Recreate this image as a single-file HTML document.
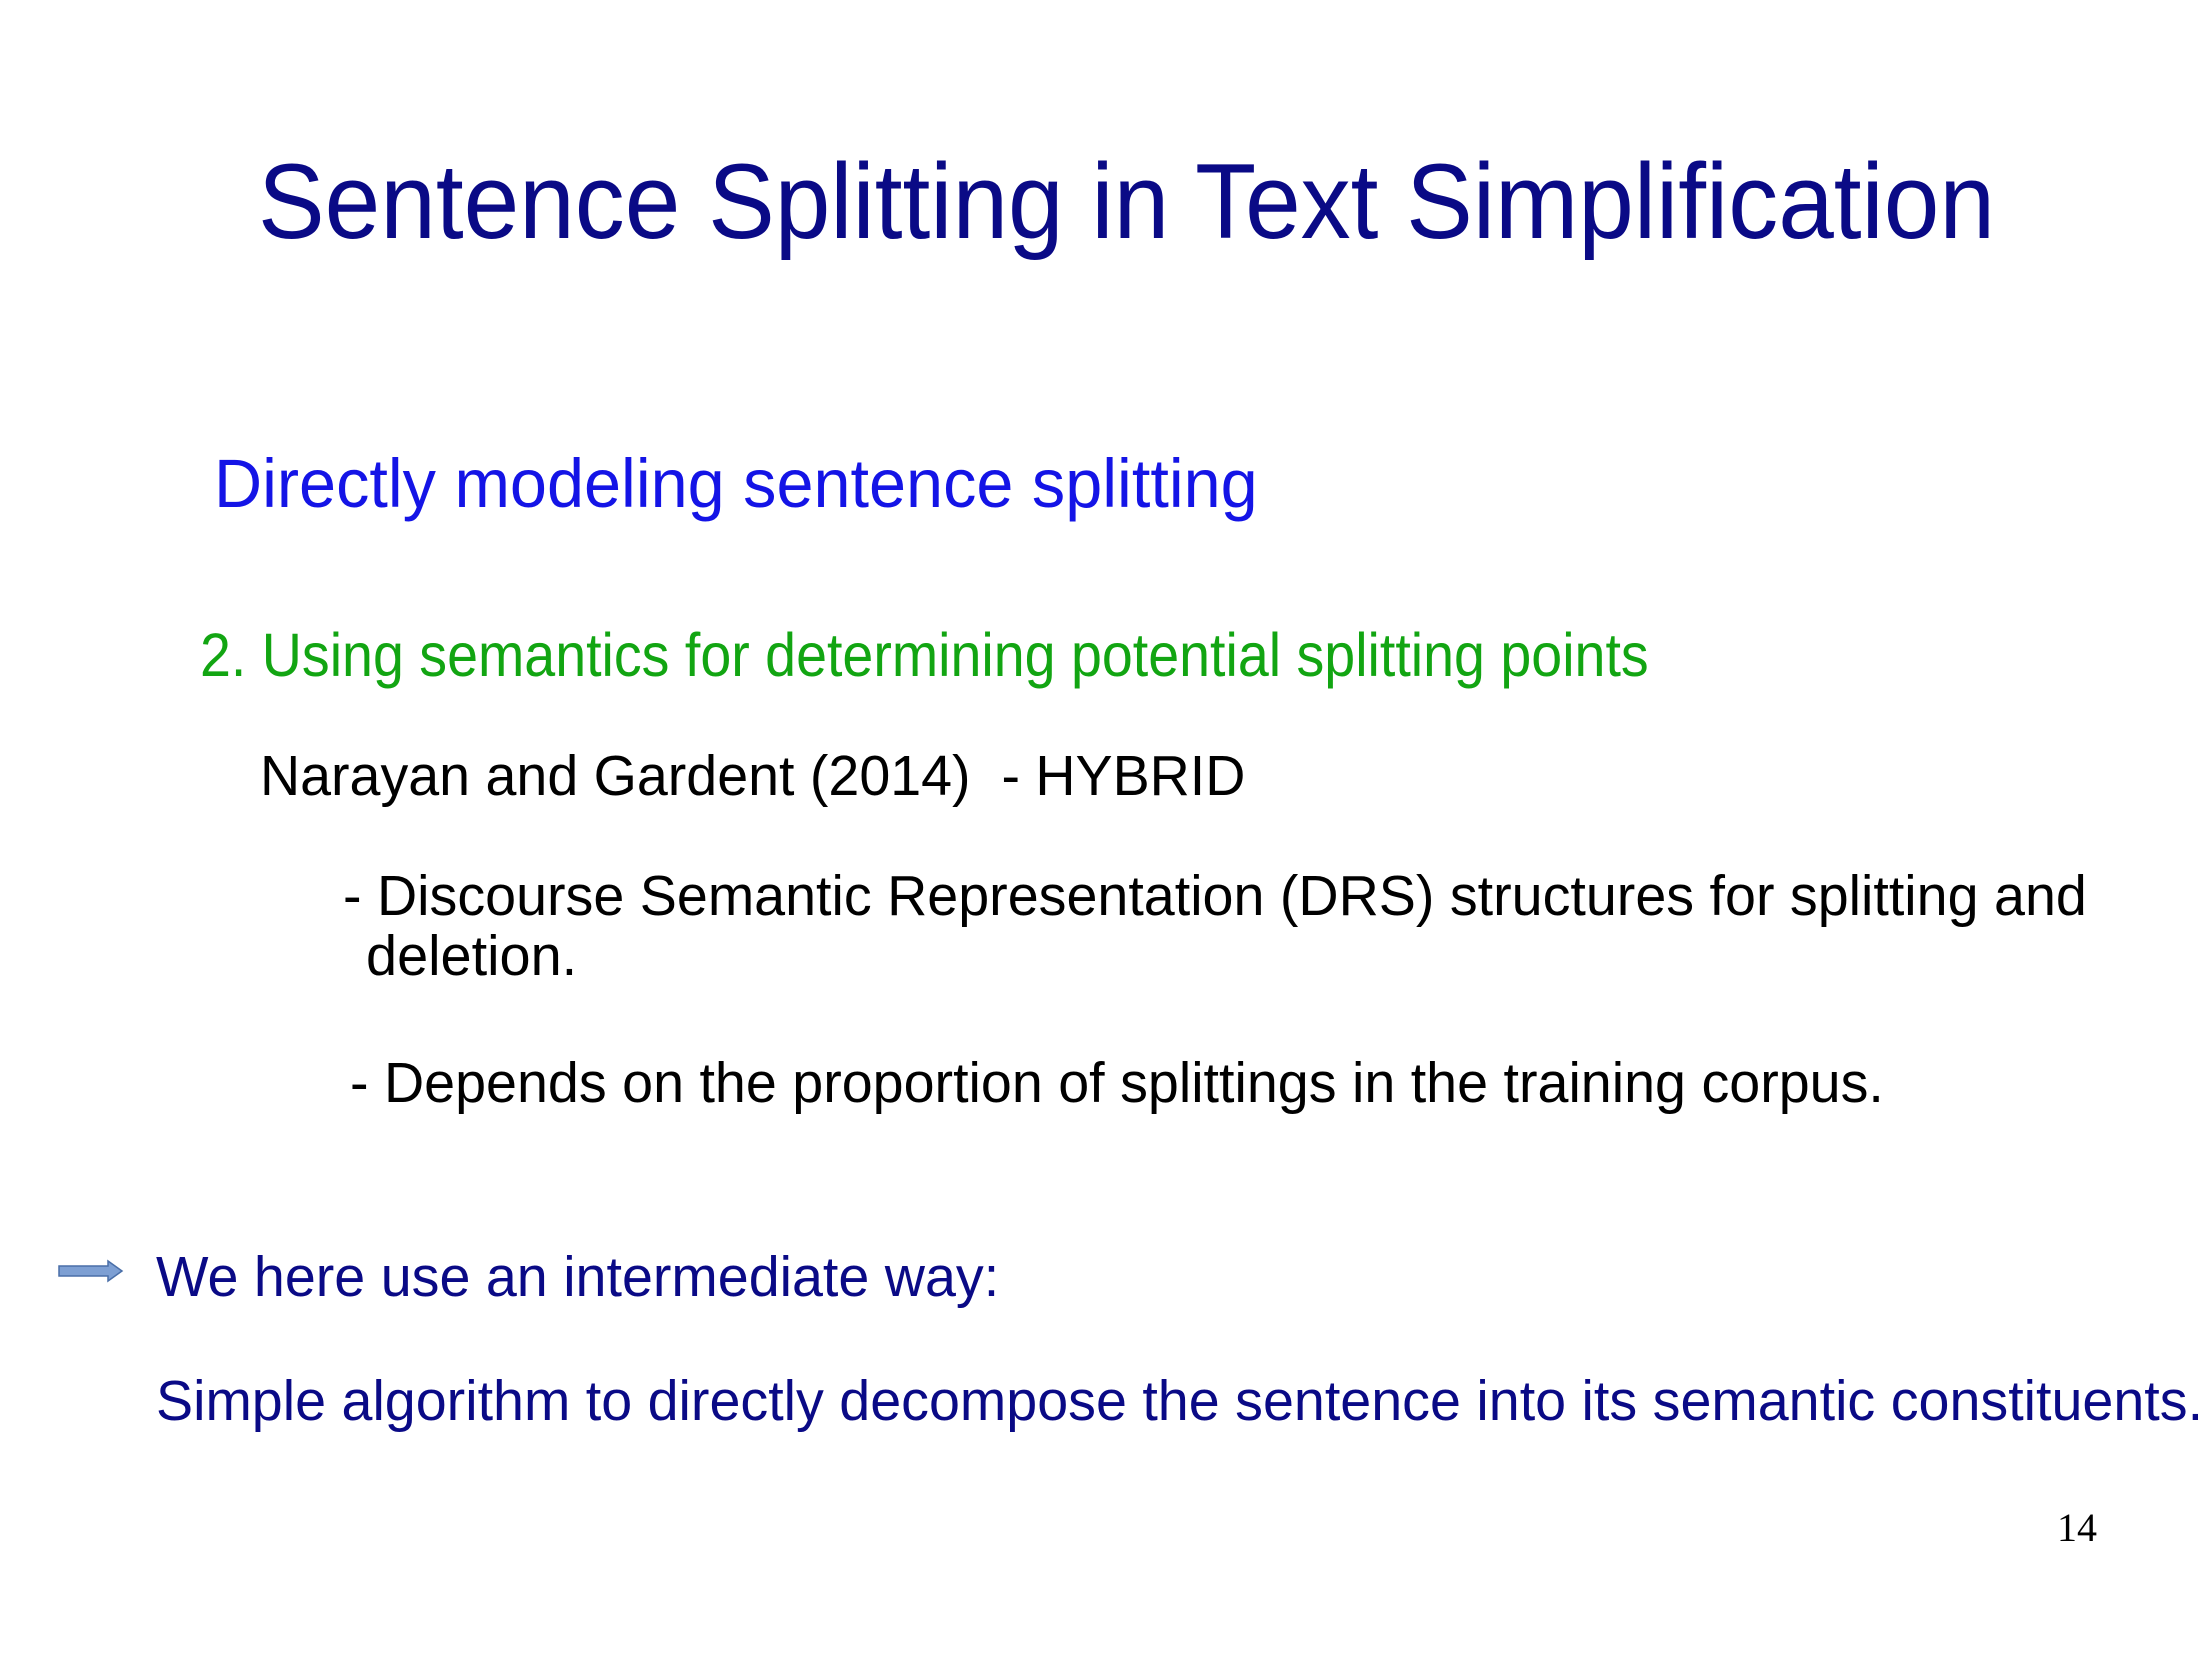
<!DOCTYPE html>
<html><head><meta charset="utf-8"><style>
html,body{margin:0;padding:0;background:#fff;}
body{width:2206px;height:1653px;position:relative;overflow:hidden;font-family:"Liberation Sans",Arial,sans-serif;}
.t{position:absolute;white-space:nowrap;line-height:1;transform-origin:0 0;}
</style></head><body>
<div class="t" style="left:258px;top:148px;font-size:107px;color:#0a0a86;transform:scaleX(0.934);">Sentence Splitting in Text Simplification</div>
<div class="t" style="left:214px;top:449px;font-size:69px;color:#1414e6;transform:scaleX(0.965);">Directly modeling sentence splitting</div>
<div class="t" style="left:200px;top:625px;font-size:61px;color:#12a512;transform:scaleX(0.911);">2. Using semantics for determining potential splitting points</div>
<div class="t" style="left:260px;top:748px;font-size:57px;color:#000;transform:scaleX(0.975);">Narayan and Gardent (2014)&nbsp; - HYBRID</div>
<div class="t" style="left:343px;top:868px;font-size:57px;color:#000;transform:scaleX(0.976);">- Discourse Semantic Representation (DRS) structures for splitting and</div>
<div class="t" style="left:366px;top:928px;font-size:57px;color:#000;transform:scaleX(0.98);">deletion.</div>
<div class="t" style="left:350px;top:1055px;font-size:57px;color:#000;transform:scaleX(0.976);">- Depends on the proportion of splittings in the training corpus.</div>
<svg style="position:absolute;left:58px;top:1259px" width="66" height="24" viewBox="0 0 66 24"><path d="M1 7 H50 V2 L64 12 L50 22 V17 H1 Z" fill="#7d9fd3" stroke="#4a6fa8" stroke-width="1.5"/></svg>
<div class="t" style="left:156px;top:1249px;font-size:57px;color:#0a0a86;transform:scaleX(0.976);">We here use an intermediate way:</div>
<div class="t" style="left:156px;top:1373px;font-size:57px;color:#0a0a86;transform:scaleX(0.976);">Simple algorithm to directly decompose the sentence into its semantic constituents.</div>
<div class="t" style="left:2057px;top:1508px;font-size:40px;color:#000;font-family:'Liberation Serif',serif;">14</div>
</body></html>
